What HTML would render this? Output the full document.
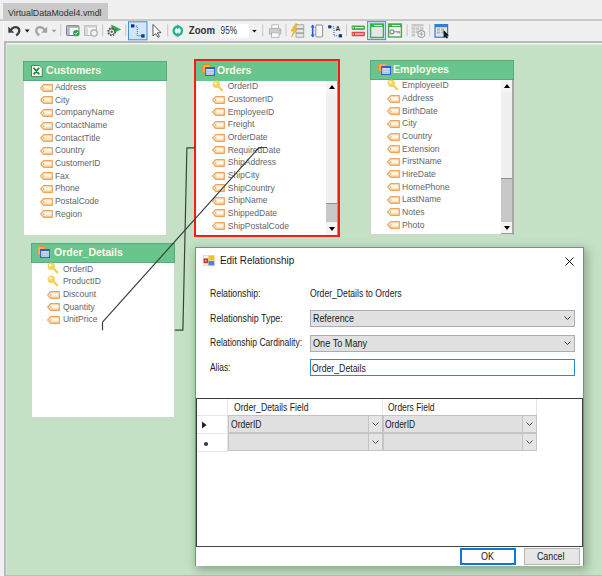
<!DOCTYPE html><html><head><meta charset="utf-8"><style>
*{margin:0;padding:0;box-sizing:border-box}
html,body{width:602px;height:576px;overflow:hidden;background:#f0f0f0;font-family:"Liberation Sans",sans-serif}
.a{position:absolute}
.t{position:absolute;white-space:nowrap;line-height:1;transform-origin:0 0}
.ht{position:absolute;white-space:nowrap;line-height:1;font-weight:bold;font-size:11px;color:#fdfbe6;transform-origin:0 0;transform:scaleX(0.965)}
.f{position:absolute;white-space:nowrap;line-height:1;font-size:8.55px;color:#65656d}
.dt{position:absolute;white-space:nowrap;line-height:1;font-size:10.5px;color:#1a1a1a;transform-origin:0 0;transform:scaleX(0.84)}
svg{position:absolute;overflow:visible}
</style></head><body>
<div class="a" style="left:3px;top:3px;width:105px;height:17px;background:#c9c9c9"></div>
<div class="t" style="left:8.00px;top:7.87px;font-size:9.6px;color:#303030;transform:scaleX(0.92)">VirtualDataModel4.vmdl</div>
<div class="a" style="left:0px;top:19px;width:602px;height:2px;background:#c8c8c8"></div>
<svg style="left:0;top:0" width="602" height="45" viewBox="0 0 602 45">
<!-- toolbar left highlight -->
<rect x="3" y="21" width="1" height="20" fill="#fafafa"/>
<!-- undo -->
<g fill="#3b404b">
<path d="M8.3 26.4 V32.8 H14.3 Z"/>
</g>
<path d="M10.8 30.2 C12.4 27.3 15.8 26.3 18.1 28 C20.1 29.7 19.7 33.4 16.2 35.4" stroke="#3b404b" stroke-width="2.4" fill="none"/>
<path d="M24.8 29.6 H29.6 L27.2 32.4 Z" fill="#111"/>
<!-- redo gray -->
<path d="M47.2 26.4 V32.8 H41.2 Z" fill="#a3a3a3"/>
<path d="M44.7 30.2 C43.1 27.3 39.7 26.3 37.4 28 C35.4 29.7 35.8 33.4 39.3 35.4" stroke="#a3a3a3" stroke-width="2.4" fill="none"/>
<path d="M51.8 29.8 H56.2 L54 32.4 Z" fill="#9a9a9a"/>
<!-- separators -->
<g fill="#c6c6c6">
<rect x="60.3" y="24.3" width="1" height="12"/>
<rect x="102.2" y="24.3" width="1" height="12"/>
<rect x="125.3" y="24.3" width="1" height="12"/>
<rect x="167.2" y="24.3" width="1" height="12"/>
<rect x="262.3" y="24.3" width="1" height="12"/>
<rect x="285.5" y="24.3" width="1" height="12"/>
<rect x="346" y="24.3" width="1" height="12"/>
<rect x="406.6" y="24.3" width="1" height="12"/>
<rect x="429.2" y="24.3" width="1" height="12"/>
</g>
<!-- icon table+check -->
<rect x="66.5" y="25.5" width="12.4" height="10" rx="0.8" fill="#f7f7f7" stroke="#7d7d7d" stroke-width="1"/>
<rect x="66.5" y="25.5" width="12.4" height="2.2" fill="#a8a8a8"/>
<rect x="67.2" y="28" width="2.6" height="7" fill="#9fb8e8"/>
<circle cx="76.2" cy="33.2" r="3.1" fill="#2aa54a"/>
<path d="M74.7 33.2 L75.8 34.3 L77.8 32.1" stroke="#fff" stroke-width="1" fill="none"/>
<!-- gray version -->
<rect x="84.5" y="25.5" width="12" height="10" fill="#f6f6f6" stroke="#bdbdbd" stroke-width="1"/>
<rect x="84.5" y="25.5" width="12" height="2" fill="#cfcfcf"/>
<rect x="85" y="28" width="3" height="7" fill="#dadada"/>
<circle cx="94" cy="33" r="3.2" fill="#f2f2f2" stroke="#a9a9a9" stroke-width="1.2"/>
<!-- gear + play -->
<path d="M111.3 24.6 L121.2 29.4 L111.3 34 Z" fill="#2fb04a"/>
<circle cx="111.7" cy="31.8" r="3.6" fill="none" stroke="#4d4d4d" stroke-width="1.6" stroke-dasharray="1.5 1.3"/>
<circle cx="111.7" cy="31.8" r="2.9" fill="#fff" stroke="#5a5a5a" stroke-width="0.9"/>
<circle cx="111.7" cy="31.8" r="1.2" fill="#2d7d3a"/>
<!-- selected button 1 -->
<rect x="128.5" y="21.8" width="18.5" height="18" fill="#d3e5f8" stroke="#3d8fe0" stroke-width="1"/>
<rect x="131" y="24.3" width="3.2" height="3.2" fill="#13318f"/>
<rect x="141.2" y="34.3" width="3.4" height="3.3" fill="#13318f"/>
<path d="M134.2 26 H137.3 V35.8 H141.2" stroke="#2a5ad0" stroke-width="1" stroke-dasharray="1 1" fill="none"/>
<!-- cursor -->
<path d="M153 24.5 V36 L155.6 33.6 L158 37.3 L159.5 36.4 L157.3 32.9 L161 32.6 Z" fill="#fff" stroke="#444" stroke-width="0.9" stroke-linejoin="round"/>
<!-- refresh -->
<g fill="none" stroke="#1db38d" stroke-width="2.1">
<path d="M177.6 26.6 A4.2 4.2 0 0 0 176 34.6"/>
<path d="M178 35 A4.2 4.2 0 0 0 179.8 27.1"/>
</g>
<path d="M177.1 24.2 L181 26.7 L177.1 29.3 Z" fill="#1db38d"/>
<path d="M178.5 32.3 L174.6 34.9 L178.5 37.4 Z" fill="#1db38d"/>
<!-- printer -->
<rect x="271.8" y="24.8" width="6.8" height="4" fill="#fdfdfd" stroke="#b4b4b4" stroke-width="0.8"/>
<rect x="269.4" y="28.4" width="11.5" height="6.2" rx="1.5" fill="#cdcdcd" stroke="#a6a6a6" stroke-width="0.8"/>
<rect x="271.4" y="32.8" width="7.6" height="4.6" fill="#f7f7f7" stroke="#b0b0b0" stroke-width="0.8"/>
<rect x="279" y="29.8" width="1.1" height="0.9" fill="#6cc985"/>
<!-- lightning + list -->
<g fill="#e6e6e6" stroke="#9a9a9a" stroke-width="0.8">
<rect x="296" y="24.8" width="7.8" height="3.6"/>
<rect x="296" y="29.2" width="7.8" height="3.6"/>
<rect x="296" y="33.6" width="7.8" height="3.6"/>
</g>
<path d="M295.6 23.8 L291 31 H293.8 L291.6 37 L297.4 28.6 H294.6 L297.2 23.8 Z" fill="#f5c51c" stroke="#d39b12" stroke-width="0.5"/>
<!-- height -->
<path d="M312.7 25.4 V36.6" stroke="#2d61d8" stroke-width="1.6"/>
<path d="M310.6 27.6 L312.7 24.6 L314.8 27.6 Z M310.6 34.4 L312.7 37.4 L314.8 34.4 Z" fill="#2d61d8"/>
<rect x="315.8" y="25" width="6.8" height="12" rx="1" fill="#f6f6f6" stroke="#8e8e8e" stroke-width="1"/>
<!-- path + A -->
<rect x="328.2" y="25.3" width="3" height="3" fill="#13318f"/>
<rect x="338.8" y="34.2" width="3.2" height="3.2" fill="#13318f"/>
<path d="M331.2 26.8 H334 V35.8 H338.8" stroke="#2a5ad0" stroke-width="1" stroke-dasharray="1 1" fill="none"/>
<text x="335.4" y="31.4" font-family="Liberation Sans" font-weight="bold" font-size="6.5" fill="#333">A</text>
<!-- green/red bars -->
<rect x="351.7" y="25.4" width="13.2" height="4.5" rx="0.8" fill="#3bb34a"/>
<rect x="355" y="27.2" width="8.5" height="1" fill="#fff"/>
<rect x="352.6" y="27.2" width="1.2" height="1" fill="#fff"/>
<rect x="351.7" y="31.7" width="13.2" height="4.5" rx="0.8" fill="#e04848"/>
<rect x="355" y="33.5" width="8.5" height="1" fill="#fff"/>
<rect x="352.6" y="33.5" width="1.2" height="1" fill="#fff"/>
<!-- selected button 2 -->
<rect x="367.6" y="21.6" width="18" height="18" fill="#d3e5f8" stroke="#3d8fe0" stroke-width="1"/>
<rect x="370.6" y="24" width="12.8" height="13.5" fill="#e6e6e6" stroke="#3cb04a" stroke-width="1.4"/>
<rect x="370.6" y="24" width="12.8" height="3" fill="#3cb04a"/>
<rect x="374" y="25.1" width="8" height="0.9" fill="#fff"/>
<!-- green window with key -->
<rect x="388.6" y="24" width="12.8" height="13" fill="#f3f3f3" stroke="#3cb04a" stroke-width="1.4"/>
<rect x="388.6" y="24" width="12.8" height="3" fill="#3cb04a"/>
<rect x="392" y="25.1" width="8" height="0.9" fill="#fff"/>
<circle cx="392" cy="31.8" r="2" fill="none" stroke="#8a8a8a" stroke-width="1.2"/>
<path d="M394 31.8 H400 M398 31.8 V33.6 M399.6 31.8 V33.2" stroke="#8a8a8a" stroke-width="1.1"/>
<!-- gray grid plus -->
<g fill="#c9c9c9">
<rect x="411.5" y="24" width="12" height="2.6"/>
<rect x="411.5" y="27.3" width="3.6" height="2.6"/><rect x="415.7" y="27.3" width="3.6" height="2.6"/><rect x="419.9" y="27.3" width="3.6" height="2.6"/>
<rect x="411.5" y="30.6" width="3.6" height="2.6"/><rect x="415.7" y="30.6" width="3.6" height="2.6"/>
<rect x="411.5" y="33.9" width="3.6" height="2.6"/>
</g>
<circle cx="421.4" cy="34" r="3.4" fill="#f4f4f4" stroke="#a5a5a5" stroke-width="1.1"/>
<path d="M421.4 32 V36 M419.4 34 H423.4" stroke="#a5a5a5" stroke-width="1"/>
<!-- blue window + cursor -->
<rect x="435" y="24.6" width="12.6" height="12.6" fill="#e4e4e4" stroke="#2f7fd8" stroke-width="1.2"/>
<rect x="435" y="24.6" width="12.6" height="2.6" fill="#2f7fd8"/>
<g fill="#b5b5b5"><rect x="437" y="28.5" width="3" height="2"/><rect x="441" y="28.5" width="3" height="2"/><rect x="437" y="31.5" width="3" height="2"/><rect x="441" y="31.5" width="3" height="2"/></g>
<path d="M443.6 30 V37.8 L445.3 36.4 L446.6 38.6 L447.8 38 L446.6 35.8 L448.8 35.6 Z" fill="#111"/>
<!-- zoom -->
<text x="188.8" y="34.3" font-family="Liberation Sans" font-size="10.6" font-weight="bold" fill="#33333d" textLength="26.2" lengthAdjust="spacingAndGlyphs">Zoom</text>
<rect x="220" y="23.8" width="38.3" height="14" fill="#ffffff"/>
<rect x="249" y="23.8" width="9.3" height="14" fill="#f0f0f0"/>
<text x="220.6" y="34.3" font-family="Liberation Sans" font-size="10.2" fill="#2a2a35" textLength="16.5" lengthAdjust="spacingAndGlyphs">95%</text>
<path d="M252.2 30 H256.6 L254.4 32.5 Z" fill="#111"/>
</svg>
<div class="a" style="left:4px;top:41.4px;width:598px;height:2.1px;background:#bababa"></div>
<div class="a" style="left:4px;top:41px;width:2px;height:535px;background:#bababa"></div>
<div class="a" style="left:6px;top:43.5px;width:596px;height:531px;background:#c4e1c5"></div>
<div class="a" style="left:4px;top:574.5px;width:598px;height:1.5px;background:#bcbcbc"></div>
<div class="a" style="left:6px;top:43.5px;width:596px;height:1.2px;background:#dcefdc"></div>
<div class="a" style="left:6px;top:43px;width:1px;height:531px;background:#d6ebd6"></div>
<div class="a" style="left:23px;top:81px;width:144px;height:155px;background:#fff;border:1px solid #cfd8cf;border-top:none"></div>
<div class="a" style="left:23px;top:61px;width:144px;height:20px;background:#69c58e;border:1px solid #5aa97a"></div>
<div class="t" style="left:45.80px;top:65.49px;font-size:11px;color:#fdfbe6;font-weight:bold;transform:scaleX(0.9604)">Customers</div>
<svg style="left:39.5px;top:83.5px" width="13" height="8" viewBox="0 0 13 8"><defs><linearGradient id="tg" x1="0" y1="0" x2="0" y2="1"><stop offset="0" stop-color="#fbe2bd"/><stop offset="0.45" stop-color="#fffbf0"/><stop offset="1" stop-color="#f8cd8a"/></linearGradient></defs><path d="M0.7 4 L3.7 0.7 H12.3 V7.3 H3.7 Z" fill="url(#tg)" stroke="#eea25e" stroke-width="1.2" stroke-linejoin="round"/><circle cx="3.7" cy="4" r="0.8" fill="#d0a040"/></svg>
<div class="f" style="left:54.90px;top:82.96px;">Address</div>
<svg style="left:39.5px;top:96.2px" width="13" height="8" viewBox="0 0 13 8"><defs><linearGradient id="tg" x1="0" y1="0" x2="0" y2="1"><stop offset="0" stop-color="#fbe2bd"/><stop offset="0.45" stop-color="#fffbf0"/><stop offset="1" stop-color="#f8cd8a"/></linearGradient></defs><path d="M0.7 4 L3.7 0.7 H12.3 V7.3 H3.7 Z" fill="url(#tg)" stroke="#eea25e" stroke-width="1.2" stroke-linejoin="round"/><circle cx="3.7" cy="4" r="0.8" fill="#d0a040"/></svg>
<div class="f" style="left:54.90px;top:95.64px;">City</div>
<svg style="left:39.5px;top:108.9px" width="13" height="8" viewBox="0 0 13 8"><defs><linearGradient id="tg" x1="0" y1="0" x2="0" y2="1"><stop offset="0" stop-color="#fbe2bd"/><stop offset="0.45" stop-color="#fffbf0"/><stop offset="1" stop-color="#f8cd8a"/></linearGradient></defs><path d="M0.7 4 L3.7 0.7 H12.3 V7.3 H3.7 Z" fill="url(#tg)" stroke="#eea25e" stroke-width="1.2" stroke-linejoin="round"/><circle cx="3.7" cy="4" r="0.8" fill="#d0a040"/></svg>
<div class="f" style="left:54.90px;top:108.32px;">CompanyName</div>
<svg style="left:39.5px;top:121.5px" width="13" height="8" viewBox="0 0 13 8"><defs><linearGradient id="tg" x1="0" y1="0" x2="0" y2="1"><stop offset="0" stop-color="#fbe2bd"/><stop offset="0.45" stop-color="#fffbf0"/><stop offset="1" stop-color="#f8cd8a"/></linearGradient></defs><path d="M0.7 4 L3.7 0.7 H12.3 V7.3 H3.7 Z" fill="url(#tg)" stroke="#eea25e" stroke-width="1.2" stroke-linejoin="round"/><circle cx="3.7" cy="4" r="0.8" fill="#d0a040"/></svg>
<div class="f" style="left:54.90px;top:121.00px;">ContactName</div>
<svg style="left:39.5px;top:134.2px" width="13" height="8" viewBox="0 0 13 8"><defs><linearGradient id="tg" x1="0" y1="0" x2="0" y2="1"><stop offset="0" stop-color="#fbe2bd"/><stop offset="0.45" stop-color="#fffbf0"/><stop offset="1" stop-color="#f8cd8a"/></linearGradient></defs><path d="M0.7 4 L3.7 0.7 H12.3 V7.3 H3.7 Z" fill="url(#tg)" stroke="#eea25e" stroke-width="1.2" stroke-linejoin="round"/><circle cx="3.7" cy="4" r="0.8" fill="#d0a040"/></svg>
<div class="f" style="left:54.90px;top:133.68px;">ContactTitle</div>
<svg style="left:39.5px;top:146.9px" width="13" height="8" viewBox="0 0 13 8"><defs><linearGradient id="tg" x1="0" y1="0" x2="0" y2="1"><stop offset="0" stop-color="#fbe2bd"/><stop offset="0.45" stop-color="#fffbf0"/><stop offset="1" stop-color="#f8cd8a"/></linearGradient></defs><path d="M0.7 4 L3.7 0.7 H12.3 V7.3 H3.7 Z" fill="url(#tg)" stroke="#eea25e" stroke-width="1.2" stroke-linejoin="round"/><circle cx="3.7" cy="4" r="0.8" fill="#d0a040"/></svg>
<div class="f" style="left:54.90px;top:146.36px;">Country</div>
<svg style="left:39.5px;top:159.6px" width="13" height="8" viewBox="0 0 13 8"><defs><linearGradient id="tg" x1="0" y1="0" x2="0" y2="1"><stop offset="0" stop-color="#fbe2bd"/><stop offset="0.45" stop-color="#fffbf0"/><stop offset="1" stop-color="#f8cd8a"/></linearGradient></defs><path d="M0.7 4 L3.7 0.7 H12.3 V7.3 H3.7 Z" fill="url(#tg)" stroke="#eea25e" stroke-width="1.2" stroke-linejoin="round"/><circle cx="3.7" cy="4" r="0.8" fill="#d0a040"/></svg>
<div class="f" style="left:54.90px;top:159.04px;">CustomerID</div>
<svg style="left:39.5px;top:172.3px" width="13" height="8" viewBox="0 0 13 8"><defs><linearGradient id="tg" x1="0" y1="0" x2="0" y2="1"><stop offset="0" stop-color="#fbe2bd"/><stop offset="0.45" stop-color="#fffbf0"/><stop offset="1" stop-color="#f8cd8a"/></linearGradient></defs><path d="M0.7 4 L3.7 0.7 H12.3 V7.3 H3.7 Z" fill="url(#tg)" stroke="#eea25e" stroke-width="1.2" stroke-linejoin="round"/><circle cx="3.7" cy="4" r="0.8" fill="#d0a040"/></svg>
<div class="f" style="left:54.90px;top:171.72px;">Fax</div>
<svg style="left:39.5px;top:184.9px" width="13" height="8" viewBox="0 0 13 8"><defs><linearGradient id="tg" x1="0" y1="0" x2="0" y2="1"><stop offset="0" stop-color="#fbe2bd"/><stop offset="0.45" stop-color="#fffbf0"/><stop offset="1" stop-color="#f8cd8a"/></linearGradient></defs><path d="M0.7 4 L3.7 0.7 H12.3 V7.3 H3.7 Z" fill="url(#tg)" stroke="#eea25e" stroke-width="1.2" stroke-linejoin="round"/><circle cx="3.7" cy="4" r="0.8" fill="#d0a040"/></svg>
<div class="f" style="left:54.90px;top:184.40px;">Phone</div>
<svg style="left:39.5px;top:197.6px" width="13" height="8" viewBox="0 0 13 8"><defs><linearGradient id="tg" x1="0" y1="0" x2="0" y2="1"><stop offset="0" stop-color="#fbe2bd"/><stop offset="0.45" stop-color="#fffbf0"/><stop offset="1" stop-color="#f8cd8a"/></linearGradient></defs><path d="M0.7 4 L3.7 0.7 H12.3 V7.3 H3.7 Z" fill="url(#tg)" stroke="#eea25e" stroke-width="1.2" stroke-linejoin="round"/><circle cx="3.7" cy="4" r="0.8" fill="#d0a040"/></svg>
<div class="f" style="left:54.90px;top:197.08px;">PostalCode</div>
<svg style="left:39.5px;top:210.3px" width="13" height="8" viewBox="0 0 13 8"><defs><linearGradient id="tg" x1="0" y1="0" x2="0" y2="1"><stop offset="0" stop-color="#fbe2bd"/><stop offset="0.45" stop-color="#fffbf0"/><stop offset="1" stop-color="#f8cd8a"/></linearGradient></defs><path d="M0.7 4 L3.7 0.7 H12.3 V7.3 H3.7 Z" fill="url(#tg)" stroke="#eea25e" stroke-width="1.2" stroke-linejoin="round"/><circle cx="3.7" cy="4" r="0.8" fill="#d0a040"/></svg>
<div class="f" style="left:54.90px;top:209.76px;">Region</div>
<svg style="left:31.2px;top:65.2px" width="12" height="13" viewBox="0 0 12 13"><path d="M0.5 0.5 H8.6 L11.2 3.1 V11.6 H0.5 Z" fill="#fbfbfb" stroke="#3f7d55" stroke-width="0.9"/><path d="M8.6 0.5 V3.1 H11.2 Z" fill="#b9c4bb"/><path d="M3 3.4 L7.9 8.9 M7.7 3.4 L3 8.9" stroke="#17862f" stroke-width="1.7" stroke-linecap="round"/></svg>
<div class="a" style="left:194px;top:59px;width:146px;height:177.5px;border:2px solid #f51b1b"></div>
<div class="a" style="left:196px;top:61px;width:142px;height:20px;background:#69c58e"></div>
<div class="t" style="left:217.40px;top:64.69px;font-size:11px;color:#fdfbe6;font-weight:bold;transform:scaleX(0.9534)">Orders</div>
<svg style="left:202px;top:63.5px" width="13" height="12" viewBox="0 0 13 12"><rect x="0.6" y="0.6" width="8" height="8.4" rx="2" fill="#f7ae55" stroke="#ec8a2a" stroke-width="1"/><rect x="3.6" y="3.6" width="8.8" height="7.8" fill="#eef2fb" stroke="#2d5fd6" stroke-width="1.2"/><rect x="3.6" y="3.6" width="8.8" height="1.4" fill="#2d5fd6"/><path d="M5.9 5 V11.4 M8 5 V11.4 M10.1 5 V11.4 M3.6 7.3 H12.4 M3.6 9.3 H12.4" stroke="#9cb0e4" stroke-width="0.7"/></svg>
<div class="a" style="left:196px;top:81px;width:142px;height:153.5px;background:#fff"></div>
<svg style="left:212px;top:80.1px" width="13" height="13" viewBox="0 0 13 13"><path d="M6 6 L10.2 10.2" stroke="#f1cf4e" stroke-width="2.3" stroke-linecap="round"/><circle cx="4.3" cy="4.3" r="3.7" fill="#f4d45c"/><circle cx="3.4" cy="3.3" r="1.3" fill="#fdf6d0"/></svg>
<div class="f" style="left:227.70px;top:82.46px;">OrderID</div>
<svg style="left:211.8px;top:95.6px" width="13" height="8" viewBox="0 0 13 8"><defs><linearGradient id="tg" x1="0" y1="0" x2="0" y2="1"><stop offset="0" stop-color="#fbe2bd"/><stop offset="0.45" stop-color="#fffbf0"/><stop offset="1" stop-color="#f8cd8a"/></linearGradient></defs><path d="M0.7 4 L3.7 0.7 H12.3 V7.3 H3.7 Z" fill="url(#tg)" stroke="#eea25e" stroke-width="1.2" stroke-linejoin="round"/><circle cx="3.7" cy="4" r="0.8" fill="#d0a040"/></svg>
<div class="f" style="left:227.70px;top:95.10px;">CustomerID</div>
<svg style="left:211.8px;top:108.3px" width="13" height="8" viewBox="0 0 13 8"><defs><linearGradient id="tg" x1="0" y1="0" x2="0" y2="1"><stop offset="0" stop-color="#fbe2bd"/><stop offset="0.45" stop-color="#fffbf0"/><stop offset="1" stop-color="#f8cd8a"/></linearGradient></defs><path d="M0.7 4 L3.7 0.7 H12.3 V7.3 H3.7 Z" fill="url(#tg)" stroke="#eea25e" stroke-width="1.2" stroke-linejoin="round"/><circle cx="3.7" cy="4" r="0.8" fill="#d0a040"/></svg>
<div class="f" style="left:227.70px;top:107.74px;">EmployeeID</div>
<svg style="left:211.8px;top:120.9px" width="13" height="8" viewBox="0 0 13 8"><defs><linearGradient id="tg" x1="0" y1="0" x2="0" y2="1"><stop offset="0" stop-color="#fbe2bd"/><stop offset="0.45" stop-color="#fffbf0"/><stop offset="1" stop-color="#f8cd8a"/></linearGradient></defs><path d="M0.7 4 L3.7 0.7 H12.3 V7.3 H3.7 Z" fill="url(#tg)" stroke="#eea25e" stroke-width="1.2" stroke-linejoin="round"/><circle cx="3.7" cy="4" r="0.8" fill="#d0a040"/></svg>
<div class="f" style="left:227.70px;top:120.38px;">Freight</div>
<svg style="left:211.8px;top:133.6px" width="13" height="8" viewBox="0 0 13 8"><defs><linearGradient id="tg" x1="0" y1="0" x2="0" y2="1"><stop offset="0" stop-color="#fbe2bd"/><stop offset="0.45" stop-color="#fffbf0"/><stop offset="1" stop-color="#f8cd8a"/></linearGradient></defs><path d="M0.7 4 L3.7 0.7 H12.3 V7.3 H3.7 Z" fill="url(#tg)" stroke="#eea25e" stroke-width="1.2" stroke-linejoin="round"/><circle cx="3.7" cy="4" r="0.8" fill="#d0a040"/></svg>
<div class="f" style="left:227.70px;top:133.02px;">OrderDate</div>
<svg style="left:211.8px;top:146.2px" width="13" height="8" viewBox="0 0 13 8"><defs><linearGradient id="tg" x1="0" y1="0" x2="0" y2="1"><stop offset="0" stop-color="#fbe2bd"/><stop offset="0.45" stop-color="#fffbf0"/><stop offset="1" stop-color="#f8cd8a"/></linearGradient></defs><path d="M0.7 4 L3.7 0.7 H12.3 V7.3 H3.7 Z" fill="url(#tg)" stroke="#eea25e" stroke-width="1.2" stroke-linejoin="round"/><circle cx="3.7" cy="4" r="0.8" fill="#d0a040"/></svg>
<div class="f" style="left:227.70px;top:145.66px;">RequiredDate</div>
<svg style="left:211.8px;top:158.8px" width="13" height="8" viewBox="0 0 13 8"><defs><linearGradient id="tg" x1="0" y1="0" x2="0" y2="1"><stop offset="0" stop-color="#fbe2bd"/><stop offset="0.45" stop-color="#fffbf0"/><stop offset="1" stop-color="#f8cd8a"/></linearGradient></defs><path d="M0.7 4 L3.7 0.7 H12.3 V7.3 H3.7 Z" fill="url(#tg)" stroke="#eea25e" stroke-width="1.2" stroke-linejoin="round"/><circle cx="3.7" cy="4" r="0.8" fill="#d0a040"/></svg>
<div class="f" style="left:227.70px;top:158.30px;">ShipAddress</div>
<svg style="left:211.8px;top:171.5px" width="13" height="8" viewBox="0 0 13 8"><defs><linearGradient id="tg" x1="0" y1="0" x2="0" y2="1"><stop offset="0" stop-color="#fbe2bd"/><stop offset="0.45" stop-color="#fffbf0"/><stop offset="1" stop-color="#f8cd8a"/></linearGradient></defs><path d="M0.7 4 L3.7 0.7 H12.3 V7.3 H3.7 Z" fill="url(#tg)" stroke="#eea25e" stroke-width="1.2" stroke-linejoin="round"/><circle cx="3.7" cy="4" r="0.8" fill="#d0a040"/></svg>
<div class="f" style="left:227.70px;top:170.94px;">ShipCity</div>
<svg style="left:211.8px;top:184.1px" width="13" height="8" viewBox="0 0 13 8"><defs><linearGradient id="tg" x1="0" y1="0" x2="0" y2="1"><stop offset="0" stop-color="#fbe2bd"/><stop offset="0.45" stop-color="#fffbf0"/><stop offset="1" stop-color="#f8cd8a"/></linearGradient></defs><path d="M0.7 4 L3.7 0.7 H12.3 V7.3 H3.7 Z" fill="url(#tg)" stroke="#eea25e" stroke-width="1.2" stroke-linejoin="round"/><circle cx="3.7" cy="4" r="0.8" fill="#d0a040"/></svg>
<div class="f" style="left:227.70px;top:183.58px;">ShipCountry</div>
<svg style="left:211.8px;top:196.8px" width="13" height="8" viewBox="0 0 13 8"><defs><linearGradient id="tg" x1="0" y1="0" x2="0" y2="1"><stop offset="0" stop-color="#fbe2bd"/><stop offset="0.45" stop-color="#fffbf0"/><stop offset="1" stop-color="#f8cd8a"/></linearGradient></defs><path d="M0.7 4 L3.7 0.7 H12.3 V7.3 H3.7 Z" fill="url(#tg)" stroke="#eea25e" stroke-width="1.2" stroke-linejoin="round"/><circle cx="3.7" cy="4" r="0.8" fill="#d0a040"/></svg>
<div class="f" style="left:227.70px;top:196.22px;">ShipName</div>
<svg style="left:211.8px;top:209.4px" width="13" height="8" viewBox="0 0 13 8"><defs><linearGradient id="tg" x1="0" y1="0" x2="0" y2="1"><stop offset="0" stop-color="#fbe2bd"/><stop offset="0.45" stop-color="#fffbf0"/><stop offset="1" stop-color="#f8cd8a"/></linearGradient></defs><path d="M0.7 4 L3.7 0.7 H12.3 V7.3 H3.7 Z" fill="url(#tg)" stroke="#eea25e" stroke-width="1.2" stroke-linejoin="round"/><circle cx="3.7" cy="4" r="0.8" fill="#d0a040"/></svg>
<div class="f" style="left:227.70px;top:208.86px;">ShippedDate</div>
<svg style="left:211.8px;top:222.0px" width="13" height="8" viewBox="0 0 13 8"><defs><linearGradient id="tg" x1="0" y1="0" x2="0" y2="1"><stop offset="0" stop-color="#fbe2bd"/><stop offset="0.45" stop-color="#fffbf0"/><stop offset="1" stop-color="#f8cd8a"/></linearGradient></defs><path d="M0.7 4 L3.7 0.7 H12.3 V7.3 H3.7 Z" fill="url(#tg)" stroke="#eea25e" stroke-width="1.2" stroke-linejoin="round"/><circle cx="3.7" cy="4" r="0.8" fill="#d0a040"/></svg>
<div class="f" style="left:227.70px;top:221.50px;">ShipPostalCode</div>
<div class="a" style="left:326px;top:81px;width:11.5px;height:153.5px;background:#f0f0f0"></div>
<div class="a" style="left:326px;top:81px;width:11.5px;height:12px;background:#f4f4f4"></div>
<div class="a" style="left:326px;top:222.5px;width:11.5px;height:12px;background:#f4f4f4"></div>
<div class="a" style="left:326px;top:203px;width:11.5px;height:19.30000000000001px;background:#c8c8c8"></div>
<div class="a" style="left:326px;top:203px;width:11.5px;height:1px;background:#8e8e8e"></div>
<svg style="left:328.8px;top:84.8px" width="6" height="4"><path d="M0 4 L3 0 L6 4Z" fill="#000"/></svg>
<svg style="left:328.8px;top:226.7px" width="6" height="4"><path d="M0 0 L3 4 L6 0Z" fill="#000"/></svg>
<div class="a" style="left:337px;top:81px;width:1px;height:153.5px;background:#9a9a9a"></div>
<div class="a" style="left:370px;top:60px;width:144px;height:20px;background:#69c58e;border:1px solid #5aa97a"></div>
<div class="t" style="left:393.30px;top:64.09px;font-size:11px;color:#fdfbe6;font-weight:bold;transform:scaleX(0.9642)">Employees</div>
<svg style="left:377.7px;top:63.3px" width="13" height="12" viewBox="0 0 13 12"><rect x="0.6" y="0.6" width="8" height="8.4" rx="2" fill="#f7ae55" stroke="#ec8a2a" stroke-width="1"/><rect x="3.6" y="3.6" width="8.8" height="7.8" fill="#eef2fb" stroke="#2d5fd6" stroke-width="1.2"/><rect x="3.6" y="3.6" width="8.8" height="1.4" fill="#2d5fd6"/><path d="M5.9 5 V11.4 M8 5 V11.4 M10.1 5 V11.4 M3.6 7.3 H12.4 M3.6 9.3 H12.4" stroke="#9cb0e4" stroke-width="0.7"/></svg>
<div class="a" style="left:370px;top:80px;width:144px;height:155.2px;background:#fff;border:1px solid #cfd8cf;border-top:none;border-right:2px solid #a9a9a9"></div>
<svg style="left:387px;top:79.0px" width="13" height="13" viewBox="0 0 13 13"><path d="M6 6 L10.2 10.2" stroke="#f1cf4e" stroke-width="2.3" stroke-linecap="round"/><circle cx="4.3" cy="4.3" r="3.7" fill="#f4d45c"/><circle cx="3.4" cy="3.3" r="1.3" fill="#fdf6d0"/></svg>
<div class="f" style="left:402.10px;top:81.36px;">EmployeeID</div>
<svg style="left:387.1px;top:94.5px" width="13" height="8" viewBox="0 0 13 8"><defs><linearGradient id="tg" x1="0" y1="0" x2="0" y2="1"><stop offset="0" stop-color="#fbe2bd"/><stop offset="0.45" stop-color="#fffbf0"/><stop offset="1" stop-color="#f8cd8a"/></linearGradient></defs><path d="M0.7 4 L3.7 0.7 H12.3 V7.3 H3.7 Z" fill="url(#tg)" stroke="#eea25e" stroke-width="1.2" stroke-linejoin="round"/><circle cx="3.7" cy="4" r="0.8" fill="#d0a040"/></svg>
<div class="f" style="left:402.10px;top:94.01px;">Address</div>
<svg style="left:387.1px;top:107.2px" width="13" height="8" viewBox="0 0 13 8"><defs><linearGradient id="tg" x1="0" y1="0" x2="0" y2="1"><stop offset="0" stop-color="#fbe2bd"/><stop offset="0.45" stop-color="#fffbf0"/><stop offset="1" stop-color="#f8cd8a"/></linearGradient></defs><path d="M0.7 4 L3.7 0.7 H12.3 V7.3 H3.7 Z" fill="url(#tg)" stroke="#eea25e" stroke-width="1.2" stroke-linejoin="round"/><circle cx="3.7" cy="4" r="0.8" fill="#d0a040"/></svg>
<div class="f" style="left:402.10px;top:106.66px;">BirthDate</div>
<svg style="left:387.1px;top:119.8px" width="13" height="8" viewBox="0 0 13 8"><defs><linearGradient id="tg" x1="0" y1="0" x2="0" y2="1"><stop offset="0" stop-color="#fbe2bd"/><stop offset="0.45" stop-color="#fffbf0"/><stop offset="1" stop-color="#f8cd8a"/></linearGradient></defs><path d="M0.7 4 L3.7 0.7 H12.3 V7.3 H3.7 Z" fill="url(#tg)" stroke="#eea25e" stroke-width="1.2" stroke-linejoin="round"/><circle cx="3.7" cy="4" r="0.8" fill="#d0a040"/></svg>
<div class="f" style="left:402.10px;top:119.31px;">City</div>
<svg style="left:387.1px;top:132.5px" width="13" height="8" viewBox="0 0 13 8"><defs><linearGradient id="tg" x1="0" y1="0" x2="0" y2="1"><stop offset="0" stop-color="#fbe2bd"/><stop offset="0.45" stop-color="#fffbf0"/><stop offset="1" stop-color="#f8cd8a"/></linearGradient></defs><path d="M0.7 4 L3.7 0.7 H12.3 V7.3 H3.7 Z" fill="url(#tg)" stroke="#eea25e" stroke-width="1.2" stroke-linejoin="round"/><circle cx="3.7" cy="4" r="0.8" fill="#d0a040"/></svg>
<div class="f" style="left:402.10px;top:131.96px;">Country</div>
<svg style="left:387.1px;top:145.2px" width="13" height="8" viewBox="0 0 13 8"><defs><linearGradient id="tg" x1="0" y1="0" x2="0" y2="1"><stop offset="0" stop-color="#fbe2bd"/><stop offset="0.45" stop-color="#fffbf0"/><stop offset="1" stop-color="#f8cd8a"/></linearGradient></defs><path d="M0.7 4 L3.7 0.7 H12.3 V7.3 H3.7 Z" fill="url(#tg)" stroke="#eea25e" stroke-width="1.2" stroke-linejoin="round"/><circle cx="3.7" cy="4" r="0.8" fill="#d0a040"/></svg>
<div class="f" style="left:402.10px;top:144.61px;">Extension</div>
<svg style="left:387.1px;top:157.8px" width="13" height="8" viewBox="0 0 13 8"><defs><linearGradient id="tg" x1="0" y1="0" x2="0" y2="1"><stop offset="0" stop-color="#fbe2bd"/><stop offset="0.45" stop-color="#fffbf0"/><stop offset="1" stop-color="#f8cd8a"/></linearGradient></defs><path d="M0.7 4 L3.7 0.7 H12.3 V7.3 H3.7 Z" fill="url(#tg)" stroke="#eea25e" stroke-width="1.2" stroke-linejoin="round"/><circle cx="3.7" cy="4" r="0.8" fill="#d0a040"/></svg>
<div class="f" style="left:402.10px;top:157.26px;">FirstName</div>
<svg style="left:387.1px;top:170.4px" width="13" height="8" viewBox="0 0 13 8"><defs><linearGradient id="tg" x1="0" y1="0" x2="0" y2="1"><stop offset="0" stop-color="#fbe2bd"/><stop offset="0.45" stop-color="#fffbf0"/><stop offset="1" stop-color="#f8cd8a"/></linearGradient></defs><path d="M0.7 4 L3.7 0.7 H12.3 V7.3 H3.7 Z" fill="url(#tg)" stroke="#eea25e" stroke-width="1.2" stroke-linejoin="round"/><circle cx="3.7" cy="4" r="0.8" fill="#d0a040"/></svg>
<div class="f" style="left:402.10px;top:169.91px;">HireDate</div>
<svg style="left:387.1px;top:183.1px" width="13" height="8" viewBox="0 0 13 8"><defs><linearGradient id="tg" x1="0" y1="0" x2="0" y2="1"><stop offset="0" stop-color="#fbe2bd"/><stop offset="0.45" stop-color="#fffbf0"/><stop offset="1" stop-color="#f8cd8a"/></linearGradient></defs><path d="M0.7 4 L3.7 0.7 H12.3 V7.3 H3.7 Z" fill="url(#tg)" stroke="#eea25e" stroke-width="1.2" stroke-linejoin="round"/><circle cx="3.7" cy="4" r="0.8" fill="#d0a040"/></svg>
<div class="f" style="left:402.10px;top:182.56px;">HomePhone</div>
<svg style="left:387.1px;top:195.8px" width="13" height="8" viewBox="0 0 13 8"><defs><linearGradient id="tg" x1="0" y1="0" x2="0" y2="1"><stop offset="0" stop-color="#fbe2bd"/><stop offset="0.45" stop-color="#fffbf0"/><stop offset="1" stop-color="#f8cd8a"/></linearGradient></defs><path d="M0.7 4 L3.7 0.7 H12.3 V7.3 H3.7 Z" fill="url(#tg)" stroke="#eea25e" stroke-width="1.2" stroke-linejoin="round"/><circle cx="3.7" cy="4" r="0.8" fill="#d0a040"/></svg>
<div class="f" style="left:402.10px;top:195.21px;">LastName</div>
<svg style="left:387.1px;top:208.4px" width="13" height="8" viewBox="0 0 13 8"><defs><linearGradient id="tg" x1="0" y1="0" x2="0" y2="1"><stop offset="0" stop-color="#fbe2bd"/><stop offset="0.45" stop-color="#fffbf0"/><stop offset="1" stop-color="#f8cd8a"/></linearGradient></defs><path d="M0.7 4 L3.7 0.7 H12.3 V7.3 H3.7 Z" fill="url(#tg)" stroke="#eea25e" stroke-width="1.2" stroke-linejoin="round"/><circle cx="3.7" cy="4" r="0.8" fill="#d0a040"/></svg>
<div class="f" style="left:402.10px;top:207.86px;">Notes</div>
<svg style="left:387.1px;top:221.1px" width="13" height="8" viewBox="0 0 13 8"><defs><linearGradient id="tg" x1="0" y1="0" x2="0" y2="1"><stop offset="0" stop-color="#fbe2bd"/><stop offset="0.45" stop-color="#fffbf0"/><stop offset="1" stop-color="#f8cd8a"/></linearGradient></defs><path d="M0.7 4 L3.7 0.7 H12.3 V7.3 H3.7 Z" fill="url(#tg)" stroke="#eea25e" stroke-width="1.2" stroke-linejoin="round"/><circle cx="3.7" cy="4" r="0.8" fill="#d0a040"/></svg>
<div class="f" style="left:402.10px;top:220.51px;">Photo</div>
<div class="a" style="left:501.4px;top:80px;width:11px;height:154px;background:#f0f0f0"></div>
<div class="a" style="left:501.4px;top:80px;width:11px;height:12px;background:#f4f4f4"></div>
<div class="a" style="left:501.4px;top:222px;width:11px;height:12px;background:#f4f4f4"></div>
<div class="a" style="left:501.4px;top:177.9px;width:11px;height:43.69999999999999px;background:#c8c8c8"></div>
<div class="a" style="left:501.4px;top:177.9px;width:11px;height:1px;background:#8e8e8e"></div>
<svg style="left:503.9px;top:83.8px" width="6" height="4"><path d="M0 4 L3 0 L6 4Z" fill="#000"/></svg>
<svg style="left:503.9px;top:226.2px" width="6" height="4"><path d="M0 0 L3 4 L6 0Z" fill="#000"/></svg>
<div class="a" style="left:501.4px;top:233.2px;width:12.6px;height:1px;background:#9a9a9a"></div>
<div class="a" style="left:31px;top:243px;width:144px;height:20px;background:#69c58e;border:1px solid #5aa97a"></div>
<div class="t" style="left:54.25px;top:247.49px;font-size:11px;color:#fdfbe6;font-weight:bold;transform:scaleX(0.9534)">Order_Details</div>
<svg style="left:37.4px;top:246px" width="13" height="12" viewBox="0 0 13 12"><rect x="0.6" y="0.6" width="8" height="8.4" rx="2" fill="#f7ae55" stroke="#ec8a2a" stroke-width="1"/><rect x="3.6" y="3.6" width="8.8" height="7.8" fill="#eef2fb" stroke="#2d5fd6" stroke-width="1.2"/><rect x="3.6" y="3.6" width="8.8" height="1.4" fill="#2d5fd6"/><path d="M5.9 5 V11.4 M8 5 V11.4 M10.1 5 V11.4 M3.6 7.3 H12.4 M3.6 9.3 H12.4" stroke="#9cb0e4" stroke-width="0.7"/></svg>
<div class="a" style="left:31px;top:263px;width:144px;height:154.5px;background:#fff;border:1px solid #cfd8cf;border-top:none"></div>
<svg style="left:47.3px;top:262.3px" width="13" height="13" viewBox="0 0 13 13"><path d="M6 6 L10.2 10.2" stroke="#f1cf4e" stroke-width="2.3" stroke-linecap="round"/><circle cx="4.3" cy="4.3" r="3.7" fill="#f4d45c"/><circle cx="3.4" cy="3.3" r="1.3" fill="#fdf6d0"/></svg>
<div class="f" style="left:62.90px;top:264.66px;">OrderID</div>
<svg style="left:47.3px;top:275.0px" width="13" height="13" viewBox="0 0 13 13"><path d="M6 6 L10.2 10.2" stroke="#f1cf4e" stroke-width="2.3" stroke-linecap="round"/><circle cx="4.3" cy="4.3" r="3.7" fill="#f4d45c"/><circle cx="3.4" cy="3.3" r="1.3" fill="#fdf6d0"/></svg>
<div class="f" style="left:62.90px;top:277.34px;">ProductID</div>
<svg style="left:47.1px;top:290.6px" width="13" height="8" viewBox="0 0 13 8"><defs><linearGradient id="tg" x1="0" y1="0" x2="0" y2="1"><stop offset="0" stop-color="#fbe2bd"/><stop offset="0.45" stop-color="#fffbf0"/><stop offset="1" stop-color="#f8cd8a"/></linearGradient></defs><path d="M0.7 4 L3.7 0.7 H12.3 V7.3 H3.7 Z" fill="url(#tg)" stroke="#eea25e" stroke-width="1.2" stroke-linejoin="round"/><circle cx="3.7" cy="4" r="0.8" fill="#d0a040"/></svg>
<div class="f" style="left:62.90px;top:290.02px;">Discount</div>
<svg style="left:47.1px;top:303.2px" width="13" height="8" viewBox="0 0 13 8"><defs><linearGradient id="tg" x1="0" y1="0" x2="0" y2="1"><stop offset="0" stop-color="#fbe2bd"/><stop offset="0.45" stop-color="#fffbf0"/><stop offset="1" stop-color="#f8cd8a"/></linearGradient></defs><path d="M0.7 4 L3.7 0.7 H12.3 V7.3 H3.7 Z" fill="url(#tg)" stroke="#eea25e" stroke-width="1.2" stroke-linejoin="round"/><circle cx="3.7" cy="4" r="0.8" fill="#d0a040"/></svg>
<div class="f" style="left:62.90px;top:302.70px;">Quantity</div>
<svg style="left:47.1px;top:315.9px" width="13" height="8" viewBox="0 0 13 8"><defs><linearGradient id="tg" x1="0" y1="0" x2="0" y2="1"><stop offset="0" stop-color="#fbe2bd"/><stop offset="0.45" stop-color="#fffbf0"/><stop offset="1" stop-color="#f8cd8a"/></linearGradient></defs><path d="M0.7 4 L3.7 0.7 H12.3 V7.3 H3.7 Z" fill="url(#tg)" stroke="#eea25e" stroke-width="1.2" stroke-linejoin="round"/><circle cx="3.7" cy="4" r="0.8" fill="#d0a040"/></svg>
<div class="f" style="left:62.90px;top:315.38px;">UnitPrice</div>
<svg style="left:0;top:0" width="602" height="576"><g stroke="#3a423c" stroke-width="1.2" fill="none" stroke-linejoin="round"><path d="M194.6 147.8 H186.9 L182.9 330.1 H174.8"/><path d="M266.9 147.5 H259 L102.5 322.2 V330.2"/></g></svg>
<div class="a" style="left:195px;top:247px;width:389px;height:319px;box-shadow:2px 3px 9px 1px rgba(60,90,60,0.42)"></div>
<div class="a" style="left:195px;top:247px;width:389px;height:319px;background:#fff;border:1px solid #4a98d8;border-bottom:none"></div>
<svg style="left:203px;top:254.8px" width="12" height="11" viewBox="0 0 12 11"><rect x="0.3" y="0.3" width="11.2" height="10.6" fill="#f6f6f6" stroke="#cfcfcf" stroke-width="0.6"/><rect x="0.6" y="3.4" width="4.6" height="4.8" fill="#d8352e"/><rect x="2" y="5.4" width="1.6" height="0.8" fill="#fff"/><rect x="5.4" y="0.6" width="5.8" height="5" fill="#f2c233"/><rect x="5.4" y="6" width="5.8" height="4.4" fill="#4a86de"/></svg>
<div class="t" style="left:219.50px;top:255.09px;font-size:11px;color:#1a1a1a;transform:scaleX(0.8988)">Edit Relationship</div>
<svg style="left:564.5px;top:256.8px" width="9" height="9" viewBox="0 0 9 9"><path d="M0.5 0.5 L8.5 8.5 M8.5 0.5 L0.5 8.5" stroke="#111" stroke-width="1"/></svg>
<div class="t" style="left:210.00px;top:288.03px;font-size:10.6px;color:#1a1a1a;transform:scaleX(0.8242)">Relationship:</div>
<div class="t" style="left:210.30px;top:312.63px;font-size:10.6px;color:#1a1a1a;transform:scaleX(0.8365)">Relationship Type:</div>
<div class="t" style="left:210.30px;top:337.43px;font-size:10.6px;color:#1a1a1a;transform:scaleX(0.8065)">Relationship Cardinality:</div>
<div class="t" style="left:210.30px;top:362.33px;font-size:10.6px;color:#1a1a1a;transform:scaleX(0.7871)">Alias:</div>
<div class="t" style="left:310.00px;top:288.43px;font-size:10.6px;color:#1a1a1a;transform:scaleX(0.8150)">Order_Details to Orders</div>
<div class="a" style="left:310px;top:309.5px;width:265px;height:17.3px;background:#e1e1e1;border:1px solid #adadad"></div>
<svg style="left:564.0px;top:316.1px" width="7" height="4" viewBox="0 0 7 4"><path d="M0.5 0.5 L3.5 3.5 L6.5 0.5" stroke="#333" stroke-width="1" fill="none"/></svg>
<div class="t" style="left:313.40px;top:313.13px;font-size:10.6px;color:#1a1a1a;transform:scaleX(0.8381)">Reference</div>
<div class="a" style="left:310px;top:334.6px;width:265px;height:17.2px;background:#e1e1e1;border:1px solid #adadad"></div>
<svg style="left:564.0px;top:341.2px" width="7" height="4" viewBox="0 0 7 4"><path d="M0.5 0.5 L3.5 3.5 L6.5 0.5" stroke="#333" stroke-width="1" fill="none"/></svg>
<div class="t" style="left:313.00px;top:338.23px;font-size:10.6px;color:#1a1a1a;transform:scaleX(0.8623)">One To Many</div>
<div class="a" style="left:310px;top:359px;width:265px;height:17.2px;background:#fff;border:1px solid #2a88dc"></div>
<div class="t" style="left:312.00px;top:362.63px;font-size:10.6px;color:#1a1a1a;transform:scaleX(0.8226)">Order_Details</div>
<div class="a" style="left:196px;top:398.3px;width:387px;height:148.6px;background:#fff;border:1px solid #3c3c3c;border-bottom:1.5px solid #444"></div>
<div class="a" style="left:227.3px;top:399.3px;width:1px;height:52px;background:#e6e6e6"></div>
<div class="a" style="left:382px;top:399.3px;width:1px;height:16px;background:#e6e6e6"></div>
<div class="a" style="left:536px;top:399.3px;width:1px;height:16px;background:#e6e6e6"></div>
<div class="a" style="left:197px;top:414.8px;width:339.5px;height:1px;background:#e6e6e6"></div>
<div class="a" style="left:197px;top:432.8px;width:31px;height:1px;background:#e6e6e6"></div>
<div class="a" style="left:197px;top:450.8px;width:31px;height:1px;background:#e6e6e6"></div>
<div class="t" style="left:233.60px;top:401.63px;font-size:10.6px;color:#1a1a1a;transform:scaleX(0.8158)">Order_Details Field</div>
<div class="t" style="left:388.40px;top:401.63px;font-size:10.6px;color:#1a1a1a;transform:scaleX(0.7976)">Orders Field</div>
<svg style="left:201.6px;top:421.2px" width="5" height="8"><path d="M0 0.4 L4.6 4 L0 7.6Z" fill="#222"/></svg>
<svg style="left:203.8px;top:441.6px" width="4" height="4"><circle cx="2" cy="2" r="2.1" fill="#3a3a3a"/></svg>
<div class="a" style="left:228px;top:415.3px;width:154.5px;height:17.5px;background:#e1e1e1;border:1px solid #c4c4c4"></div>
<div class="a" style="left:367.5px;top:415.3px;width:15px;height:17.5px;background:#e5e5e5;border:1px solid #c4c4c4"></div>
<svg style="left:371.5px;top:422.1px" width="7" height="4" viewBox="0 0 7 4"><path d="M0.5 0.5 L3.5 3.5 L6.5 0.5" stroke="#555" stroke-width="1" fill="none"/></svg>
<div class="a" style="left:382.5px;top:415.3px;width:154px;height:17.5px;background:#e1e1e1;border:1px solid #c4c4c4"></div>
<div class="a" style="left:521.5px;top:415.3px;width:15px;height:17.5px;background:#e5e5e5;border:1px solid #c4c4c4"></div>
<svg style="left:525.5px;top:422.1px" width="7" height="4" viewBox="0 0 7 4"><path d="M0.5 0.5 L3.5 3.5 L6.5 0.5" stroke="#555" stroke-width="1" fill="none"/></svg>
<div class="a" style="left:228px;top:433.3px;width:154.5px;height:18px;background:#e1e1e1;border:1px solid #c4c4c4"></div>
<div class="a" style="left:367.5px;top:433.3px;width:15px;height:18px;background:#e5e5e5;border:1px solid #c4c4c4"></div>
<svg style="left:371.5px;top:440.3px" width="7" height="4" viewBox="0 0 7 4"><path d="M0.5 0.5 L3.5 3.5 L6.5 0.5" stroke="#555" stroke-width="1" fill="none"/></svg>
<div class="a" style="left:382.5px;top:433.3px;width:154px;height:18px;background:#e1e1e1;border:1px solid #c4c4c4"></div>
<div class="a" style="left:521.5px;top:433.3px;width:15px;height:18px;background:#e5e5e5;border:1px solid #c4c4c4"></div>
<svg style="left:525.5px;top:440.3px" width="7" height="4" viewBox="0 0 7 4"><path d="M0.5 0.5 L3.5 3.5 L6.5 0.5" stroke="#555" stroke-width="1" fill="none"/></svg>
<div class="t" style="left:230.60px;top:418.93px;font-size:10.6px;color:#1a1a1a;transform:scaleX(0.8094)">OrderID</div>
<div class="t" style="left:384.90px;top:418.93px;font-size:10.6px;color:#1a1a1a;transform:scaleX(0.8014)">OrderID</div>
<div class="a" style="left:459.8px;top:547.7px;width:56.2px;height:17px;background:#fdfdfd;border:2px solid #0a78d8"></div>
<div class="t" style="left:480.90px;top:551.33px;font-size:10.6px;color:#1a1a1a;transform:scaleX(0.8487)">OK</div>
<div class="a" style="left:523.6px;top:547.7px;width:56.3px;height:17px;background:#e6e6e6;border:1px solid #b4b4b4"></div>
<div class="t" style="left:536.60px;top:551.33px;font-size:10.6px;color:#1a1a1a;transform:scaleX(0.8329)">Cancel</div>
</body></html>
